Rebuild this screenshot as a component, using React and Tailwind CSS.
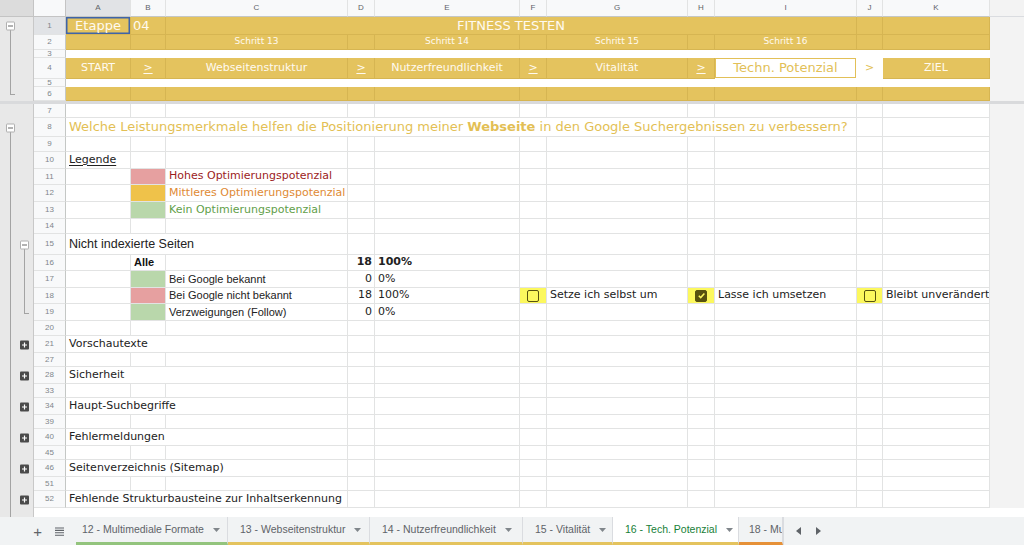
import React from 'react'

const ORDER = ['A', 'B', 'C', 'D', 'E', 'F', 'G', 'H', 'I', 'J', 'K']

const W = {
  A: 'w-[65px]', B: 'w-[35px]', C: 'w-[182px]', D: 'w-[27px]', E: 'w-[145px]', F: 'w-[27px]',
  G: 'w-[141px]', H: 'w-[27px]', I: 'w-[142px]', J: 'w-[26px]', K: 'w-[107px]',
}

// merged / overflowing ranges
const SPAN = {
  'A-C': 'w-[282px]',
  'A-I': 'w-[791px]',
  'C-I': 'w-[691px]',
}

const TONE = {
  white: 'bg-white border-[#e2e3e3]',
  gold: 'bg-[#e4c35e] border-[#d6b552] text-[#fffaf0]',
  blank: 'bg-white border-white',
  red: 'bg-[#e6a0a0] border-[#e2e3e3]',
  orange: 'bg-[#efc24a] border-[#e2e3e3]',
  green: 'bg-[#b9d7ab] border-[#e2e3e3]',
  yellow: 'bg-[#fcf85e] border-[#e2e3e3]',
}

const VERDANA = "font-['DejaVu_Sans',Verdana,sans-serif]"
const ARIAL = "font-['Liberation_Sans',Arial,sans-serif]"

const LEVEL = {
  1: { box: 'left-[6px]', line: 'left-[10px]' },
  2: { box: 'left-[20px]', line: 'left-[24px]' },
}

function Mark({ kind, level }) {
  const p = LEVEL[level]
  if (kind === 'line') return <span className={`absolute top-0 bottom-0 w-px bg-[#a3a3a3] ${p.line}`} />
  if (kind === 'end') {
    return (
      <>
        <span className={`absolute top-0 h-1/2 w-px bg-[#a3a3a3] ${p.line}`} />
        <span className={`absolute top-1/2 h-px w-[5px] bg-[#a3a3a3] ${p.line}`} />
      </>
    )
  }
  if (kind === 'minus') {
    return (
      <>
        <span className={`absolute top-1/2 bottom-0 w-px bg-[#a3a3a3] ${p.line}`} />
        <span className={`absolute top-1/2 -translate-y-1/2 w-[9px] h-[9px] bg-white border border-[#b0b0b0] rounded-[1px] flex items-center justify-center ${p.box}`}>
          <span className="w-[5px] h-px bg-[#666]" />
        </span>
      </>
    )
  }
  if (kind === 'plus') {
    return (
      <span className={`absolute top-1/2 -translate-y-1/2 w-[9px] h-[9px] bg-[#4a4a4a] rounded-[1px] flex items-center justify-center ${p.box}`}>
        <svg width="7" height="7" viewBox="0 0 7 7">
          <path d="M3.5 1v5M1 3.5h5" stroke="#fff" strokeWidth="1.2" />
        </svg>
      </span>
    )
  }
  return null
}

function Gutter({ g1, g2 }) {
  return (
    <div className="w-[34px] shrink-0 h-full relative bg-[#e8e8e8] border-r border-[#c8c8c8]">
      {g1 && <Mark kind={g1} level={1} />}
      {g2 && <Mark kind={g2} level={2} />}
    </div>
  )
}

function Row({ n, h, g1, g2, tone = 'white', sel, cells = {} }) {
  const out = []
  let i = 0
  while (i < ORDER.length) {
    const k = ORDER[i]
    const c = cells[k] || {}
    let width = W[k]
    if (c.to) {
      width = SPAN[`${k}-${c.to}`]
      i = ORDER.indexOf(c.to) + 1
    } else {
      i++
    }
    out.push(
      <div
        key={k}
        className={`shrink-0 h-full flex items-center overflow-hidden whitespace-nowrap border-r border-b ${width} ${TONE[c.tone || tone]} ${c.cls || ''}`}
      >
        {c.content}
      </div>
    )
  }
  return (
    <div className={`flex shrink-0 ${h}`}>
      <Gutter g1={g1} g2={g2} />
      <div className={`w-[32px] shrink-0 h-full flex items-center justify-center text-[8px] text-[#80868b] border-r border-b border-r-[#c4c7c5] border-b-[#e2e3e3] ${ARIAL} ${sel ? 'bg-[#e1e3e6]' : 'bg-[#f8f9fa]'}`}>
        {n}
      </div>
      {out}
      <div className="flex-1 h-full bg-[#f3f3f3]" />
    </div>
  )
}

function ColumnHeader() {
  return (
    <div className={`flex shrink-0 h-[17px] ${ARIAL}`}>
      <div className="w-[34px] shrink-0 bg-[#dcdcdc] border-r border-b border-[#c4c4c4]" />
      <div className="w-[32px] shrink-0 bg-[#f8f9fa] border-r border-b border-[#c4c4c4]" />
      {ORDER.map(k => (
        <div
          key={k}
          className={`shrink-0 ${W[k]} flex items-center justify-center text-[8px] text-[#5f6368] border-r border-b border-r-[#e2e3e3] border-b-[#c4c7c5] ${k === 'A' ? 'bg-[#e1e3e6]' : 'bg-[#f8f9fa]'}`}
        >
          {k}
        </div>
      ))}
      <div className="flex-1 bg-[#f3f3f3] border-b border-[#dadce0]" />
    </div>
  )
}

function Box({ checked }) {
  return (
    <span className={`w-[12px] h-[12px] rounded-[2px] border-[1.5px] border-[#57520f] flex items-center justify-center ${checked ? 'bg-[#57520f]' : ''}`}>
      {checked && (
        <svg width="9" height="9" viewBox="0 0 10 10">
          <path d="M2 5.2l2.1 2.1L8.2 2.8" stroke="#fcf85e" strokeWidth="1.7" fill="none" />
        </svg>
      )}
    </span>
  )
}

const arrow = (
  <span className="w-full text-center underline underline-offset-2 text-[11px]">&gt;</span>
)

const center = text => <span className="w-full text-center">{text}</span>

function Caret() {
  return (
    <svg width="7" height="4" viewBox="0 0 7 4" className="shrink-0">
      <path d="M0 0h7L3.5 4z" fill="#80868b" />
    </svg>
  )
}

const TABS = [
  { label: '12 - Multimediale Formate', w: 'w-[152px]', pl: 'pl-[6px]', stripe: 'border-b-[#93c47d]' },
  { label: '13 - Webseitenstruktur', w: 'w-[142px]', pl: 'pl-[12px]', stripe: 'border-b-[#e4c35e]' },
  { label: '14 - Nutzerfreundlichkeit', w: 'w-[153px]', pl: 'pl-[12px]', stripe: 'border-b-[#e4c35e]' },
  { label: '15 - Vitalität', w: 'w-[90px]', pl: 'pl-[12px]', stripe: 'border-b-[#e4c35e]' },
  { label: '16 - Tech. Potenzial', w: 'w-[126px]', pl: 'pl-[12px]', stripe: 'border-b-[#e4c35e]', active: true },
  { label: '18 - Mu', w: 'w-[44px]', pl: 'pl-[10px]', stripe: 'border-b-[#e69138]', clip: true },
]

function TabBar() {
  return (
    <div className={`flex h-[28px] shrink-0 bg-[#f1f3f4] ${ARIAL}`}>
      <div className="w-[76px] shrink-0 flex items-center justify-end gap-[13px] pr-[12px] text-[#5f6368]">
        <span className="text-[15px] leading-none">+</span>
        <svg width="9" height="9" viewBox="0 0 9 9">
          <path d="M0 1h9M0 3.4h9M0 5.8h9M0 8.2h9" stroke="#5f6368" strokeWidth="1.1" />
        </svg>
      </div>
      {TABS.map(t => (
        <div
          key={t.label}
          className={`shrink-0 h-full flex items-center gap-[9px] overflow-hidden whitespace-nowrap border-r border-r-[#dadce0] border-b-[3px] text-[10.5px] ${t.w} ${t.pl} ${t.stripe} ${t.active ? 'bg-white text-[#188038]' : 'text-[#5f6368]'}`}
        >
          <span>{t.label}</span>
          {!t.clip && <Caret />}
        </div>
      ))}
      <div className="flex-1 h-full flex items-center gap-[15px] pl-[12px] border-l border-[#dadce0]">
        <svg width="5" height="8" viewBox="0 0 5 8"><path d="M5 0v8L0 4z" fill="#5f6368" /></svg>
        <svg width="5" height="8" viewBox="0 0 5 8"><path d="M0 0v8l5-4z" fill="#5f6368" /></svg>
      </div>
    </div>
  )
}

const groupRows = [
  { n: 21, title: 'Vorschautexte' },
  { n: 27 },
  { n: 28, title: 'Sicherheit' },
  { n: 33 },
  { n: 34, title: 'Haupt-Suchbegriffe' },
  { n: 39 },
  { n: 40, title: 'Fehlermeldungen' },
  { n: 45 },
  { n: 46, title: 'Seitenverzeichnis (Sitemap)' },
  { n: 51 },
  { n: 52, title: 'Fehlende Strukturbausteine zur Inhaltserkennung' },
]

export default function App() {
  const txt = 'px-[3px] text-[11px] text-[#222]'
  const num = 'justify-end pr-[2px] text-[11px] text-[#222]'
  return (
    <div className={`w-[1024px] h-[545px] overflow-hidden flex flex-col bg-white ${VERDANA}`}>
      <ColumnHeader />

      {/* frozen header band */}
      <Row n={1} h="h-[18px]" g1="minus" tone="gold" sel cells={{
        A: { content: center('Etappe'), cls: 'text-[13px] shadow-[inset_0_0_0_1.5px_#3f64a8]' },
        B: { content: <span className="pl-[2px]">04</span>, cls: 'text-[13px]' },
        C: { to: 'I', content: center('FITNESS TESTEN'), cls: 'text-[13px]' },
      }} />
      <Row n={2} h="h-[15px]" g1="line" tone="gold" cells={{
        C: { content: center('Schritt 13'), cls: 'text-[9px]' },
        E: { content: center('Schritt 14'), cls: 'text-[9px]' },
        G: { content: center('Schritt 15'), cls: 'text-[9px]' },
        I: { content: center('Schritt 16'), cls: 'text-[9px]' },
      }} />
      <Row n={3} h="h-[8px]" g1="line" tone="blank" />
      <Row n={4} h="h-[21px]" g1="line" tone="gold" cells={{
        A: { content: center('START'), cls: 'text-[11px]' },
        B: { content: arrow },
        C: { content: center('Webseitenstruktur'), cls: 'text-[11px]' },
        D: { content: arrow },
        E: { content: center('Nutzerfreundlichkeit'), cls: 'text-[11px]' },
        F: { content: arrow },
        G: { content: center('Vitalität'), cls: 'text-[11px]' },
        H: { content: arrow },
        I: {
          tone: 'blank',
          content: (
            <span className="w-full h-full border-[1.5px] border-[#e2c058] flex items-center justify-center text-[13px] text-[#e2bf58]">
              Techn. Potenzial
            </span>
          ),
        },
        J: { tone: 'blank', content: center('>'), cls: 'text-[11px] text-[#e2bf58]' },
        K: { content: center('ZIEL'), cls: 'text-[11px]' },
      }} />
      <Row n={5} h="h-[8px]" g1="line" tone="blank" />
      <Row n={6} h="h-[14px]" g1="end" tone="gold" />
      <div className="h-[3px] shrink-0 bg-[#d9dadc]" />

      {/* body */}
      <Row n={7} h="h-[14px]" />
      <Row n={8} h="h-[19px]" g1="minus" cells={{
        A: {
          to: 'I',
          cls: 'px-[3px] text-[13px] text-[#e3bf55]',
          content: (
            <span>
              Welche Leistungsmerkmale helfen die Positionierung meiner <b>Webseite</b> in den Google Suchergebnissen zu verbessern?
            </span>
          ),
        },
      }} />
      <Row n={9} h="h-[15px]" g1="line" />
      <Row n={10} h="h-[17px]" g1="line" cells={{
        A: { content: <span className="underline underline-offset-2">Legende</span>, cls: txt },
      }} />
      <Row n={11} h="h-[16px]" g1="line" cells={{
        B: { tone: 'red' },
        C: { content: 'Hohes Optimierungspotenzial', cls: 'px-[3px] text-[11px] text-[#9c1c1c]' },
      }} />
      <Row n={12} h="h-[17px]" g1="line" cells={{
        B: { tone: 'orange' },
        C: { content: 'Mittleres Optimierungspotenzial', cls: 'px-[3px] text-[11px] text-[#e08a34]' },
      }} />
      <Row n={13} h="h-[17px]" g1="line" cells={{
        B: { tone: 'green' },
        C: { content: 'Kein Optimierungspotenzial', cls: 'px-[3px] text-[11px] text-[#62a04a]' },
      }} />
      <Row n={14} h="h-[15px]" g1="line" />
      <Row n={15} h="h-[21px]" g1="line" g2="minus" cells={{
        A: { to: 'C', content: 'Nicht indexierte Seiten', cls: `px-[3px] text-[12.5px] text-[#222] ${ARIAL}` },
      }} />
      <Row n={16} h="h-[16px]" g1="line" g2="line" cells={{
        B: { content: 'Alle', cls: `px-[3px] text-[11px] font-bold text-[#111] ${ARIAL}` },
        D: { content: '18', cls: `${num} font-bold` },
        E: { content: '100%', cls: 'px-[3px] text-[11px] font-bold text-[#222]' },
      }} />
      <Row n={17} h="h-[17px]" g1="line" g2="line" cells={{
        B: { tone: 'green' },
        C: { content: 'Bei Google bekannt', cls: `px-[3px] text-[11px] text-[#222] ${ARIAL}` },
        D: { content: '0', cls: num },
        E: { content: '0%', cls: 'px-[3px] text-[11px] text-[#222]' },
      }} />
      <Row n={18} h="h-[16px]" g1="line" g2="line" cells={{
        B: { tone: 'red' },
        C: { content: 'Bei Google nicht bekannt', cls: `px-[3px] text-[11px] text-[#222] ${ARIAL}` },
        D: { content: '18', cls: num },
        E: { content: '100%', cls: 'px-[3px] text-[11px] text-[#222]' },
        F: { tone: 'yellow', content: <Box />, cls: 'justify-center' },
        G: { content: 'Setze ich selbst um', cls: txt },
        H: { tone: 'yellow', content: <Box checked />, cls: 'justify-center' },
        I: { content: 'Lasse ich umsetzen', cls: txt },
        J: { tone: 'yellow', content: <Box />, cls: 'justify-center' },
        K: { content: 'Bleibt unverändert', cls: 'pl-[3px] text-[11px] text-[#222]' },
      }} />
      <Row n={19} h="h-[17px]" g1="line" g2="end" cells={{
        B: { tone: 'green' },
        C: { content: 'Verzweigungen (Follow)', cls: `px-[3px] text-[11px] text-[#222] ${ARIAL}` },
        D: { content: '0', cls: num },
        E: { content: '0%', cls: 'px-[3px] text-[11px] text-[#222]' },
      }} />
      <Row n={20} h="h-[15px]" g1="line" />

      {groupRows.map(r => (
        <Row
          key={r.n}
          n={r.n}
          h={r.title ? 'h-[17px]' : 'h-[14px]'}
          g1="line"
          g2={r.title ? 'plus' : undefined}
          cells={r.title ? { A: { to: 'C', content: r.title, cls: txt } } : {}}
        />
      ))}

      <div className="flex h-[9px] shrink-0">
        <div className="w-[34px] shrink-0 h-full relative bg-[#e8e8e8] border-r border-[#c8c8c8]">
          <Mark kind="line" level={1} />
        </div>
        <div className="flex-1 bg-white" />
      </div>

      <TabBar />
    </div>
  )
}
